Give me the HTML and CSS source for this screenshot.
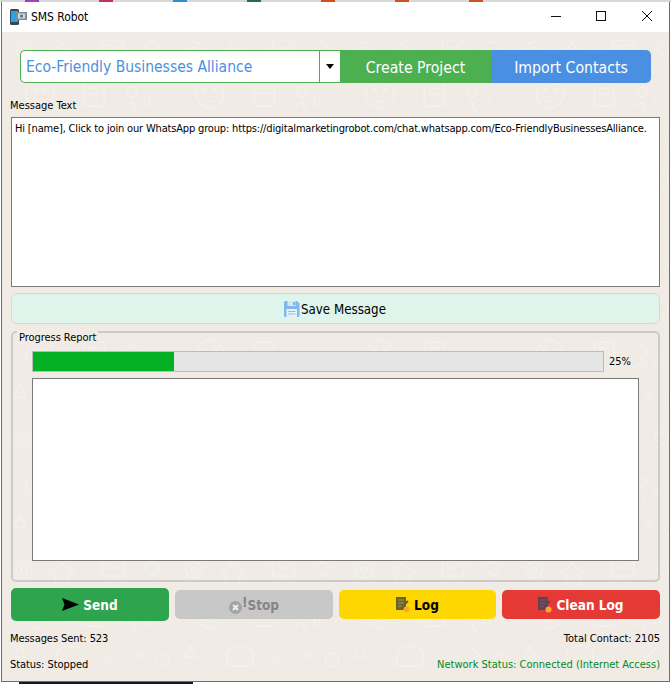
FILE: index.html
```html
<!DOCTYPE html>
<html lang="en">
<head>
<meta charset="utf-8">
<title>SMS Robot</title>
<link rel="stylesheet" href="styles.css">
</head>
<body>
<div class="desk-top">
  <i class="speck s1"></i><i class="speck s2"></i><i class="speck s3"></i><i class="speck s4"></i><i class="speck s5"></i><i class="speck s6"></i><i class="speck s7"></i>
</div>
<div class="window">
  <header class="titlebar">
    <svg class="app-icon" width="17" height="17" viewBox="0 0 17 17"><rect x="0" y="0" width="9" height="16" rx="1.500" fill="#37474f"/><rect x="1" y="2" width="7" height="11" fill="#29a3e8"/><rect x="6" y="3" width="11" height="8" fill="#78909c"/><rect x="8" y="4.500" width="7" height="5" fill="#cfd8dc"/><circle cx="11.500" cy="7" r="1.500" fill="#546e7a"/></svg>
    <span class="app-title">SMS Robot</span>
    <div class="win-controls">
      <svg width="14" height="14" viewBox="0 0 14 14"><path d="M2 7.500H12" stroke="#111" fill="none"/></svg>
      <svg width="14" height="14" viewBox="0 0 14 14"><rect x="2.500" y="2.500" width="9" height="9" stroke="#111" fill="none"/></svg>
      <svg width="14" height="14" viewBox="0 0 14 14"><path d="M2 2L12 12M12 2L2 12" stroke="#111" fill="none"/></svg>
    </div>
  </header>
  <main class="content">
    <svg class="doodles" width="667" height="650" fill="none" stroke="#f5f2ed" stroke-width="1">
      <defs>
        <pattern id="wallpaper" width="170" height="130" patternUnits="userSpaceOnUse">
          <circle cx="22" cy="18" r="8"/><circle cx="22" cy="18" r="3"/>
          <path d="M60 10l5 7 8 2-6 5 1 8-8-4-7 4 1-8-6-5 8-2z"/>
          <rect x="100" y="8" width="22" height="16" rx="3"/><path d="M100 10l11 8 11-8"/>
          <path d="M145 12c8-6 16 4 8 12-8-4-13-8-8-12z"/>
          <circle cx="38" cy="62" r="14"/><path d="M31 66c4 5 10 5 14 0"/><circle cx="33" cy="58" r="1.500"/><circle cx="43" cy="58" r="1.500"/>
          <path d="M82 50h20v24h-20zM86 56h12M86 62h12"/>
          <circle cx="130" cy="60" r="5"/><circle cx="145" cy="70" r="3"/><path d="M120 76l10-6 4 10"/>
          <path d="M12 105l6-12 6 12zM55 100c6-8 20-8 26 0v14h-26z"/>
          <path d="M105 100l5 5-5 5-5-5zM130 96l14 14M144 96l-14 14"/><circle cx="160" cy="108" r="7"/>
        </pattern>
      </defs>
      <rect width="667" height="650" fill="url(#wallpaper)" stroke="none"/>
    </svg>
    <div class="top-row">
      <div class="combo">
        <span class="combo-text">Eco-Friendly Businesses Alliance</span>
        <span class="combo-arrow"><i class="caret"></i></span>
      </div>
      <button class="top-btn create">Create Project</button>
      <button class="top-btn import">Import Contacts</button>
    </div>
    <label class="field-label">Message Text</label>
    <div class="message-box">Hi [name], Click to join our WhatsApp group: https://digitalmarketingrobot.com/chat.whatsapp.com/Eco-FriendlyBusinessesAlliance.</div>
    <button class="save-btn">
      <svg width="17" height="18" viewBox="0 0 17 18"><path d="M1 2.500A1.500 1.500 0 0 1 2.500 1H14l2.500 2.500V15.500A1.500 1.500 0 0 1 15 17H2.500A1.500 1.500 0 0 1 1 15.500z" fill="#7fb8ea"/><rect x="4.500" y="1" width="8" height="5" fill="#d6e8f7"/><rect x="10" y="2" width="2" height="3" fill="#7fb8ea"/><rect x="3.500" y="9" width="10.500" height="8" fill="#e6f1fa"/><path d="M5 11.500h7.500M5 14h7.500" stroke="#8fbfe8"/></svg>
      <span>Save Message</span>
    </button>
    <section class="group">
      <span class="group-title">Progress Report</span>
      <div class="progress-row">
        <div class="progress-track"><div class="progress-fill" style="width:24.7%"></div></div>
        <span class="progress-text">25%</span>
      </div>
      <div class="log-box"></div>
    </section>
    <div class="action-row">
      <button class="action send">
        <svg width="17" height="14" viewBox="0 0 17 14"><path d="M0 0L17 6.500L0 13L2.500 6.500z" fill="#000"/></svg>
        <span>Send</span>
      </button>
      <button class="action stop">
        <svg class="stop-icon" width="13" height="13" viewBox="0 0 13 13"><circle cx="6.500" cy="6.500" r="6.500" fill="#a3a3a3"/><path d="M4 4l5 5M9 4L4 9" stroke="#eee" stroke-width="2"/></svg>
        <span class="bang">!</span><span>Stop</span>
      </button>
      <button class="action log">
        <svg width="14" height="16" viewBox="0 0 14 16"><rect x="0" y="0" width="10" height="13" fill="#6b6231"/><path d="M2 3h6M2 6h6M2 9h4" stroke="#a39840"/><path d="M8 8l4-4" stroke="#6b6231" stroke-width="2"/><circle cx="10.500" cy="12.500" r="3" fill="#ffa726"/></svg>
        <span>Log</span>
      </button>
      <button class="action clean">
        <svg width="14" height="16" viewBox="0 0 14 16"><rect x="0" y="0" width="10" height="13" fill="#5f4457"/><path d="M2 3h6M2 6h6M2 9h4" stroke="#865068"/><path d="M8 8l4-4" stroke="#5f4457" stroke-width="2"/><circle cx="10.500" cy="12.500" r="3" fill="#ffa726"/></svg>
        <span>Clean Log</span>
      </button>
    </div>
    <div class="stat-row first">
      <span>Messages Sent: 523</span>
      <span class="stat-end">Total Contact: 2105</span>
    </div>
    <div class="stat-row">
      <span>Status: Stopped</span>
      <span class="stat-end net">Network Status: Connected (Internet Access)</span>
    </div>
  </main>
</div>
<div class="desk-bottom"></div>
</body>
</html>
```

FILE: styles.css
```css
* { box-sizing: border-box; }
html, body { margin: 0; padding: 0; }
body {
  width: 671px;
  height: 684px;
  overflow: hidden;
  background: #fff;
  font-family: "DejaVu Sans Condensed", "DejaVu Sans", sans-serif;
  font-size: 11px;
  color: #000;
}
.desk-top { height: 2px; display: flex; background: #d8d8d8; gap: 60px; padding-left: 25px; }
.speck { display: block; width: 14px; height: 2px; background: #555; }
.s1 { background: #a040c0; }
.s2 { background: #c0306a; }
.s3 { background: #2a8fd0; }
.s4 { background: #1c6a60; }
.s5 { background: #d05020; }
.s6 { background: #d05020; }
.s7 { background: #d05020; }
.window {
  width: 669px;
  height: 680px;
  margin-left: 1px;
  border: 1px solid #6e6e6e;
  border-top: 0;
  display: flex;
  flex-direction: column;
}
.titlebar {
  height: 30px;
  flex: none;
  background: #fff;
  display: flex;
  align-items: center;
  padding-left: 8px;
  gap: 4px;
}
.app-title { font-size: 12px; letter-spacing: -0.05px; }
.win-controls { margin-left: auto; display: flex; gap: 31px; padding: 0 15px 2px 0; }
.win-controls svg:last-child { margin-left: 1px; }
.content {
  position: relative;
  flex: 1;
  background: #f0ece5;
  padding: 18px 8px 0 9px;
  display: flex;
  flex-direction: column;
}
.doodles { position: absolute; left: 0; top: 0; }
.content > *:not(.doodles) { position: relative; }
.top-row { display: flex; height: 33px; margin: 0 9px 0 9px; }
.combo {
  width: 320px;
  display: flex;
  background: #fff;
  border: 1px solid #4caf50;
  border-right: 0;
  border-radius: 5px 0 0 5px;
}
.combo-text { flex: 1; color: #4a90e2; font-size: 15.500px; line-height: 33px; padding-left: 5px; white-space: nowrap; }
.combo-arrow { width: 21px; border-left: 1px solid #4caf50; display: flex; align-items: center; justify-content: center; }
.caret { width: 0; height: 0; border-left: 4.500px solid transparent; border-right: 4.500px solid transparent; border-top: 5px solid #000; }
.top-btn { border: 0; padding: 2px 0 0; color: #fff; font: inherit; font-size: 15.700px; }
.create { width: 151px; background: #4caf50; }
.import { width: 160px; background: #4a90e2; border-radius: 0 5px 5px 0; }
.field-label { display: block; margin: 16px 0 0 -1px; height: 18px; line-height: 14px; }
.message-box {
  height: 170px;
  width: 649px;
  background: #fff;
  border: 1px solid #7a7a7a;
  padding: 3px 3px;
  line-height: 16px;
  letter-spacing: -0.165px;
  white-space: nowrap;
  overflow: hidden;
}
.save-btn {
  margin-top: 6px;
  width: 649px;
  height: 31px;
  background: #dff5ec;
  border: 1px solid #cfdcd6;
  border-radius: 6px;
  display: flex;
  align-items: center;
  justify-content: center;
  gap: 1px;
  padding: 2px 0 0;
  font: inherit;
  font-size: 13.200px;
}
.save-btn svg { margin: -2px 0 0 -2px; }
.group {
  margin-top: 7px;
  width: 649px;
  height: 251px;
  border: 2px solid #cbcbcb;
  border-radius: 5px;
  padding: 18px 19px 0 19px;
}
.group-title {
  position: absolute;
  left: 4px;
  top: -2px;
  padding: 0 2px;
  height: 13px;
  line-height: 13px;
  background: #f0ece5;
  letter-spacing: -0.05px;
}
.progress-row { display: flex; align-items: center; height: 21px; }
.progress-track { width: 572px; height: 21px; background: #e5e5e5; border: 1px solid #bcbcbc; }
.progress-fill { height: 100%; background: #06b025; }
.progress-text { margin-left: 5px; }
.log-box { margin-top: 6px; width: 607px; height: 183px; background: #fff; border: 1px solid #7a7a7a; }
.action-row { display: flex; gap: 6px; margin-top: 6px; height: 33px; align-items: center; }
.action {
  width: 158px;
  height: 29px;
  border: 0;
  border-radius: 5px;
  padding: 1px 0 0;
  display: flex;
  align-items: center;
  justify-content: center;
  gap: 4px;
  font: inherit;
  font-size: 13.500px;
  font-weight: bold;
}
.send { height: 33px; background: #2ea44f; color: #fff; }
.stop { background: #c8c8c8; color: #858585; gap: 0; }
.stop-icon { margin-top: 4px; }
.bang { margin-top: -6px; }
.log { width: 157px; background: #ffd700; color: #000; }
.clean { background: #e53935; color: #fff; }
.stat-row { display: flex; justify-content: space-between; width: 650px; margin-left: -1px; height: 26px; line-height: 26px; letter-spacing: -0.07px; }
.stat-row.first { margin-top: 5px; }
.stat-end { letter-spacing: 0; }
.net { color: #008a1e; }
.desk-bottom { height: 2px; width: 174px; margin-left: 19px; background: #14142a; }
```
